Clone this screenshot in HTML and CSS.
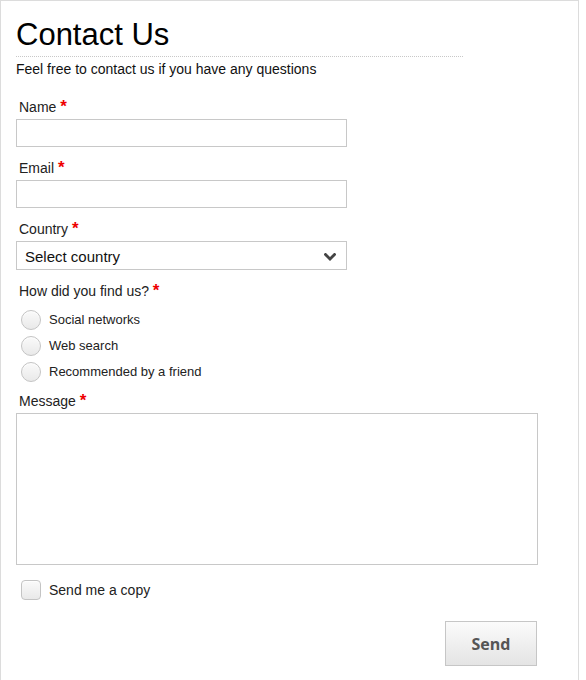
FILE: index.html
```html
<!DOCTYPE html>
<html lang="en">
<head>
    <meta charset="UTF-8">
    <meta name="viewport" content="width=device-width, initial-scale=1.0">
    <title>Contact Us</title>
    <link rel="stylesheet" href="styles.css">
</head>
<body>
    <div class="page">
        <h1 class="title">Contact Us</h1>
        <p class="intro">Feel free to contact us if you have any questions</p>

        <form class="contact-form">
            <div class="field">
                <label for="name">Name <span class="req">*</span></label>
                <input type="text" id="name" class="text-input">
            </div>

            <div class="field">
                <label for="email">Email <span class="req">*</span></label>
                <input type="text" id="email" class="text-input">
            </div>

            <div class="field">
                <label for="country">Country <span class="req">*</span></label>
                <div class="select-wrap">
                    <select id="country" class="select-input">
                        <option>Select country</option>
                    </select>
                    <svg class="chevron" width="12" height="8" viewBox="0 0 12 8">
                        <path d="M1.5 1.5 L6 6 L10.5 1.5" fill="none" stroke="#444" stroke-width="2.8" stroke-linecap="square"/>
                    </svg>
                </div>
            </div>

            <div class="field field-options">
                <label>How did you find us? <span class="req">*</span></label>
                <div class="options">
                    <label class="option"><input type="radio" name="found" class="radio"> Social networks</label>
                    <label class="option"><input type="radio" name="found" class="radio"> Web search</label>
                    <label class="option"><input type="radio" name="found" class="radio"> Recommended by a friend</label>
                </div>
            </div>

            <div class="field">
                <label for="message">Message <span class="req">*</span></label>
                <textarea id="message" class="message-input"></textarea>
            </div>

            <label class="copy"><input type="checkbox" class="checkbox"> Send me a copy</label>

            <div class="actions">
                <button type="button" class="send-button">Send</button>
            </div>
        </form>
    </div>
</body>
</html>
```

FILE: styles.css
```css
body {
    font-family: Arial, "Liberation Sans", sans-serif;
    margin: 0;
    padding: 0;
    color: #111;
    background-color: #fff;
}

.page {
    box-sizing: border-box;
    width: 579px;
    min-height: 680px;
    border: 1px solid #dcdcdc;
    border-bottom: none;
    padding: 17px 15px 0 15px;
}

.title {
    width: 447px;
    margin: 0;
    font-size: 31px;
    font-weight: normal;
    line-height: 34px;
    color: #000;
    padding-bottom: 4px;
    border-bottom: 1px dotted #c8c8c8;
}

.intro {
    margin: 4px 0 0 0;
    font-size: 14px;
    line-height: 16px;
    color: #111;
}

.contact-form {
    margin-top: 22px;
    width: 522px;
}

.field {
    margin-bottom: 13px;
}

.field-options {
    margin-bottom: 11px;
}

.field > label {
    display: block;
    padding-left: 3px;
    font-size: 14px;
    line-height: 16px;
    margin-bottom: 4px;
    color: #222;
}

.req {
    color: #e00;
    font-weight: bold;
    font-size: 17px;
    line-height: 10px;
}

.text-input {
    box-sizing: border-box;
    display: block;
    width: 331px;
    height: 28px;
    border: 1px solid #c8c8c8;
    padding: 4px 8px;
    margin: 0;
    font-family: inherit;
    font-size: 14px;
}

.select-wrap {
    position: relative;
    width: 331px;
}

.select-input {
    box-sizing: border-box;
    display: block;
    width: 331px;
    height: 29px;
    border: 1px solid #c8c8c8;
    border-radius: 0;
    padding: 1px 8px 0 8px;
    margin: 0;
    background-color: #fff;
    color: #111;
    font-family: inherit;
    font-size: 15px;
    appearance: none;
    -webkit-appearance: none;
}

.chevron {
    position: absolute;
    right: 11px;
    top: 12px;
    pointer-events: none;
}

.options {
    display: flex;
    flex-direction: column;
    gap: 6px;
    padding-top: 7px;
}

.option,
.copy {
    display: flex;
    align-items: center;
    gap: 8px;
    padding-left: 5px;
    font-size: 13px;
    line-height: 20px;
    color: #222;
}

.copy {
    font-size: 14px;
    margin-top: 15px;
}

.radio,
.checkbox {
    appearance: none;
    -webkit-appearance: none;
    box-sizing: border-box;
    width: 20px;
    height: 20px;
    margin: 0;
    border: 1px solid #c4c4c4;
    background: linear-gradient(#fafafa, #e9e9e9);
    box-shadow: inset 0 1px 1px rgba(255, 255, 255, 0.8);
}

.radio {
    border-radius: 50%;
}

.checkbox {
    border-radius: 4px;
}

.message-input {
    box-sizing: border-box;
    display: block;
    width: 522px;
    height: 152px;
    border: 1px solid #c8c8c8;
    margin: 0;
    padding: 6px 8px;
    resize: none;
    font-family: inherit;
    font-size: 14px;
}

.actions {
    display: flex;
    justify-content: flex-end;
    margin-top: 21px;
}

.send-button {
    box-sizing: border-box;
    width: 92px;
    height: 45px;
    border: 1px solid #c6c6c6;
    background: linear-gradient(#fbfbfb, #e4e4e4);
    color: #555;
    font-family: "Open Sans", Arial, sans-serif;
    font-weight: bold;
    font-size: 16px;
    padding: 0;
    margin-right: 1px;
}
```
